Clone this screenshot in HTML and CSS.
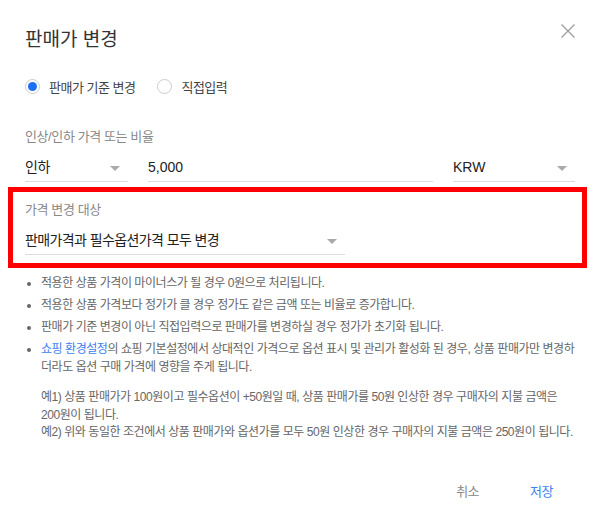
FILE: index.html
```html
<!DOCTYPE html>
<html lang="ko">
<head>
    <meta charset="UTF-8">
    <meta name="viewport" content="width=device-width, initial-scale=1.0">
    <title>판매가 변경</title>
    <link rel="stylesheet" href="styles.css">
</head>
<body>
    <div class="dialog">
        <div class="dialog-header">
            <h1>판매가 변경</h1>
            <button class="close-btn" aria-label="닫기">
                <svg width="14" height="14" viewBox="0 0 14 14">
                    <path d="M0.5 0.5 L13.5 13.5 M13.5 0.5 L0.5 13.5" stroke="#9a9a9a" stroke-width="1.2" fill="none"/>
                </svg>
            </button>
        </div>

        <div class="radio-group">
            <label class="radio checked"><span class="radio-mark"></span>판매가 기준 변경</label>
            <label class="radio"><span class="radio-mark"></span>직접입력</label>
        </div>

        <div class="field">
            <div class="field-label">인상/인하 가격 또는 비율</div>
            <div class="field-row">
                <div class="select select-dir">인하<span class="caret"></span></div>
                <div class="text-input">5,000</div>
                <div class="select select-currency">KRW<span class="caret"></span></div>
            </div>
        </div>

        <div class="field target">
            <div class="field-label">가격 변경 대상</div>
            <div class="select select-target">판매가격과 필수옵션가격 모두 변경<span class="caret"></span></div>
        </div>

        <ul class="notes">
            <li>적용한 상품 가격이 마이너스가 될 경우 0원으로 처리됩니다.</li>
            <li>적용한 상품 가격보다 정가가 클 경우 정가도 같은 금액 또는 비율로 증가합니다.</li>
            <li>판매가 기준 변경이 아닌 직접입력으로 판매가를 변경하실 경우 정가가 초기화 됩니다.</li>
            <li><a href="#">쇼핑 환경설정</a>의 쇼핑 기본설정에서 상대적인 가격으로 옵션 표시 및 관리가 활성화 된 경우, 상품 판매가만 변경하더라도 옵션 구매 가격에 영향을 주게 됩니다.
                <p class="example">예1) 상품 판매가가 100원이고 필수옵션이 +50원일 때, 상품 판매가를 50원 인상한 경우 구매자의 지불 금액은 200원이 됩니다.<br>예2) 위와 동일한 조건에서 상품 판매가와 옵션가를 모두 50원 인상한 경우 구매자의 지불 금액은 250원이 됩니다.</p>
            </li>
        </ul>

        <div class="dialog-footer">
            <button class="btn btn-cancel">취소</button>
            <button class="btn btn-save">저장</button>
        </div>
    </div>
</body>
</html>
```

FILE: styles.css
```css
body {
    margin: 0;
    background: #fff;
    font-family: "Liberation Sans", "Noto Sans CJK KR", sans-serif;
    color: #333;
}
.dialog {
    width: 600px;
    height: 520px;
    box-sizing: border-box;
    padding: 27px 25px 0;
    background: #fff;
}
.dialog-header {
    display: flex;
    justify-content: space-between;
    align-items: flex-start;
}
h1 {
    margin: 0;
    font-size: 19px;
    line-height: 26px;
    font-weight: normal;
    color: #333;
}
.close-btn {
    margin-top: -3px;
    padding: 0;
    border: none;
    background: none;
    width: 14px;
    height: 14px;
    cursor: pointer;
}
.close-btn svg {
    display: block;
}
.radio-group {
    display: flex;
    gap: 22px;
    margin-top: 23px;
}
.radio {
    display: flex;
    align-items: center;
    height: 20px;
    font-size: 13px;
    letter-spacing: -0.5px;
    color: #444;
}
.radio-mark {
    width: 15px;
    height: 15px;
    box-sizing: border-box;
    border: 1px solid #ccc;
    border-radius: 50%;
    margin-right: 9px;
    display: flex;
    align-items: center;
    justify-content: center;
}
.radio.checked .radio-mark::after {
    content: "";
    width: 9px;
    height: 9px;
    border-radius: 50%;
    background: #1f6ff5;
}
.field {
    margin-top: 32px;
}
.field-label {
    font-size: 13px;
    line-height: 18px;
    letter-spacing: -0.4px;
    color: #888;
}
.field-row {
    display: flex;
    gap: 20px;
    margin-top: 10px;
}
.select,
.text-input {
    position: relative;
    font-size: 14px;
    line-height: 22px;
    padding-bottom: 3px;
    border-bottom: 1px solid #ddd;
    color: #222;
}
.select-dir {
    width: 103px;
    letter-spacing: -0.5px;
}
.text-input {
    width: 285px;
}
.select-currency {
    width: 122px;
}
.caret {
    position: absolute;
    right: 8px;
    top: 10px;
    width: 0;
    height: 0;
    border-left: 5px solid transparent;
    border-right: 5px solid transparent;
    border-top: 5px solid #aaa;
}
.target {
    margin: 5px -12px 0 -17px;
    padding: 9px 7px 8px 12px;
    border: 5px solid #f00;
}
.select-target {
    width: 320px;
    margin-top: 10px;
    letter-spacing: -0.6px;
}
.notes {
    margin: 6px -4px 0 0;
    padding: 0 0 0 16px;
    font-size: 12px;
    line-height: 18px;
    letter-spacing: -0.45px;
    color: #666;
}
.notes li {
    margin-bottom: 4px;
}
.notes a {
    color: #3b7ff0;
    text-decoration: none;
}
.example {
    margin: 13px 0 0;
    line-height: 17.5px;
    word-break: keep-all;
}
.dialog-footer {
    display: flex;
    justify-content: flex-end;
    gap: 7px;
    margin-top: 34px;
}
.btn {
    border: none;
    background: none;
    font-family: inherit;
    font-size: 13px;
    line-height: 16px;
    letter-spacing: -0.5px;
    padding: 8px 22px;
    cursor: pointer;
}
.btn-cancel {
    color: #888;
}
.btn-save {
    color: #3b7ff0;
}
```
